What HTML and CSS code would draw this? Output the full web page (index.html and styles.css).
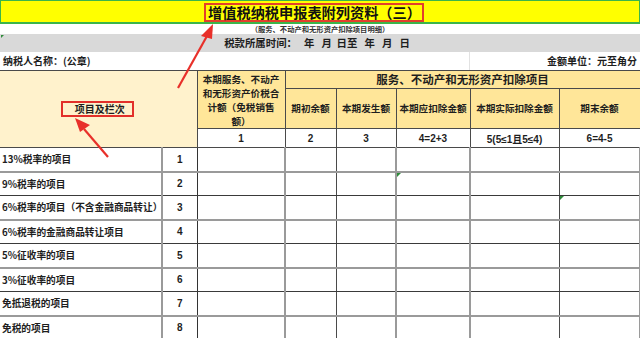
FILE: index.html
```html
<!DOCTYPE html>
<html lang="zh-CN">
<head>
<meta charset="utf-8">
<title>增值税纳税申报表附列资料（三）</title>
<link rel="stylesheet" href="styles.css">
</head>
<body>
<div class="sheet">
  <div class="title-row"><span class="title">增值税纳税申报表附列资料（三）</span></div>
  <div class="sub-row">（服务、不动产和无形资产扣除项目明细）</div>
  <div class="period-row">税款所属时间：&nbsp;&nbsp;&nbsp;年&nbsp;&nbsp;&nbsp;月&nbsp;&nbsp;日至&nbsp;&nbsp;&nbsp;年&nbsp;&nbsp;&nbsp;月&nbsp;&nbsp;&nbsp;日</div>
  <div class="info-row">
    <div class="info-left">纳税人名称：(公章)</div>
    <div class="info-right">金额单位：元至角分</div>
  </div>
  <table class="grid">
    <colgroup>
      <col class="w-label"><col class="w-num"><col class="w-c1"><col class="w-c2"><col class="w-c3"><col class="w-c4"><col class="w-c5"><col class="w-c6">
    </colgroup>
    <thead>
      <tr class="h1">
        <th class="item" rowspan="3" colspan="2"><span class="boxed">项目及栏次</span></th>
        <th class="c1" rowspan="2">本期服务、不动产和无形资产价税合计额（免税销售额）</th>
        <th class="group" colspan="5">服务、不动产和无形资产扣除项目</th>
      </tr>
      <tr class="h2">
        <th>期初余额</th>
        <th>本期发生额</th>
        <th>本期应扣除金额</th>
        <th>本期实际扣除金额</th>
        <th>期末余额</th>
      </tr>
      <tr class="h3">
        <td>1</td><td>2</td><td>3</td><td>4=2+3</td><td>5(5≤1且5≤4)</td><td>6=4-5</td>
      </tr>
    </thead>
    <tbody>
      <tr class="r-odd"><td class="label">13%税率的项目</td><td class="num">1</td><td></td><td></td><td></td><td></td><td></td><td></td></tr>
      <tr class="r-even"><td class="label">9%税率的项目</td><td class="num">2</td><td></td><td></td><td></td><td class="mark"></td><td></td><td></td></tr>
      <tr class="r-odd"><td class="label">6%税率的项目（不含金融商品转让）</td><td class="num">3</td><td></td><td></td><td></td><td></td><td></td><td class="mark"></td></tr>
      <tr class="r-even"><td class="label">6%税率的金融商品转让项目</td><td class="num">4</td><td></td><td></td><td></td><td></td><td></td><td></td></tr>
      <tr class="r-odd"><td class="label">5%征收率的项目</td><td class="num">5</td><td></td><td></td><td></td><td></td><td></td><td></td></tr>
      <tr class="r-even"><td class="label">3%征收率的项目</td><td class="num">6</td><td></td><td></td><td></td><td></td><td></td><td></td></tr>
      <tr class="r-odd"><td class="label">免抵退税的项目</td><td class="num">7</td><td></td><td></td><td></td><td></td><td></td><td></td></tr>
      <tr class="r-even"><td class="label">免税的项目</td><td class="num">8</td><td></td><td></td><td></td><td></td><td></td><td></td></tr>
    </tbody>
  </table>
  <svg class="arrows" width="640" height="338" viewBox="0 0 640 338" aria-hidden="true">
    <line x1="178" y1="88" x2="207" y2="36" stroke="#e8302a" stroke-width="2.2"/>
    <polygon points="213,24 201,36 212,39" fill="#e8302a"/>
    <line x1="108" y1="157" x2="84" y2="129" stroke="#e8302a" stroke-width="2.2"/>
    <polygon points="75,118 80,132 90,125" fill="#e8302a"/>
  </svg>
</div>
</body>
</html>
```
FILE: styles.css
```css
* { box-sizing: border-box; }
html, body { margin: 0; padding: 0; background: #fff; }
body {
  font-family: "Noto Sans CJK SC", "Noto Sans", sans-serif;
  color: #1e1e1e;
  width: 640px;
  height: 338px;
  overflow: hidden;
}
.sheet { position: relative; width: 640px; }

.title-row {
  height: 24px;
  background: #ffff00;
  border: 1px solid #3bb54a;
  border-bottom: 2px solid #3bb54a;
  display: flex;
  justify-content: center;
  align-items: flex-start;
  padding-top: 2px;
  padding-right: 12px;
}
.title {
  font-size: 14.2px;
  font-weight: 700;
  line-height: 15px;
  height: 19px;
  padding: 0 1px 0 2px;
  border: 2px solid #e2402c;
  color: #111;
}

.sub-row {
  height: 10px;
  font-size: 7.3px;
  line-height: 10px;
  text-align: center;
  font-weight: 700;
  color: #333;
}

.period-row {
  position: relative;
  height: 18px;
  background: #d9d9d9;
  font-size: 10.4px;
  font-weight: 700;
  line-height: 18px;
  text-align: center;
  padding-right: 6px;
}
.period-row::before {
  content: "";
  position: absolute;
  left: 1px;
  top: 1px;
  border-top: 3px solid #2e8b3a;
  border-right: 3px solid transparent;
}

.info-row {
  height: 18px;
  display: flex;
  font-size: 10px;
  font-weight: 700;
  line-height: 18px;
}
.info-left { width: 470px; padding-left: 3px; border-right: 1px solid #e2e2e2; }
.info-right { flex: 1; text-align: right; padding-right: 3px; }

.grid {
  width: 640px;
  table-layout: fixed;
  border-collapse: collapse;
  font-weight: 700;
}
.w-label { width: 162px; }
.w-num { width: 35px; }
.w-c1 { width: 88px; }
.w-c2 { width: 51px; }
.w-c3 { width: 60px; }
.w-c4 { width: 74px; }
.w-c5 { width: 89px; }
.w-c6 { width: 81px; }

.grid th, .grid td {
  border: 1px solid #4a4a4a;
  padding: 0;
  text-align: center;
  vertical-align: middle;
  overflow: hidden;
}
.grid th { font-weight: 700; background: #ffe699; font-size: 9.6px; line-height: 13px; }
.grid tr.h1 { height: 18px; }
.grid tr.h2 { height: 40px; }
.grid tr.h3 { height: 19px; }
.grid th.item { background: #fff2cc; border-left: 0; font-size: 10px; }
.boxed {
  display: inline-block;
  border: 2px solid #e2302a;
  width: 73px;
  height: 16px;
  line-height: 12px;
  padding-left: 5px;
  margin-left: -2px;
  margin-top: 0;
}
.grid th.c1 { font-size: 9.6px; line-height: 14px; padding: 0 4px; }
.grid th.group { font-size: 11.5px; line-height: 17px; font-weight: 600; }
.grid tr.h3 td {
  background: #fff;
  font-family: "Liberation Sans", "Noto Sans CJK SC", sans-serif;
  font-size: 10px;
}

.grid tbody tr { height: 24px; }
.grid tbody td { font-size: 9.7px; }
.grid td.label { text-align: left; padding-left: 2px; border-left: 0; white-space: nowrap; overflow: visible; }
.grid td.num { font-family: "Liberation Sans", sans-serif; font-size: 10px; border-right: 1px solid #333; }
.grid tbody tr td:nth-child(1) { border-right: 2px solid #9a9a9a; }
.grid tbody tr td:nth-child(3) { border-right: 2px solid #9a9a9a; }
.grid tbody tr td:nth-child(5) { border-right: 2px solid #9a9a9a; }
.grid tbody tr td:nth-child(6) { border-right: 2px solid #9a9a9a; }
.grid tbody tr td:nth-child(8) { border-right: 2px solid #9a9a9a; }
.grid tr.r-odd td { border-bottom: 2px solid #9a9a9a; }
.grid tr.r-even td { border-bottom: 1px solid #3a3a3a; }

.grid td.mark { position: relative; }
.grid td.mark::before {
  content: "";
  position: absolute;
  left: 0;
  top: 0;
  border-top: 4px solid #2e8b3a;
  border-right: 4px solid transparent;
}

.arrows {
  position: absolute;
  left: 0;
  top: 0;
  pointer-events: none;
}
```
